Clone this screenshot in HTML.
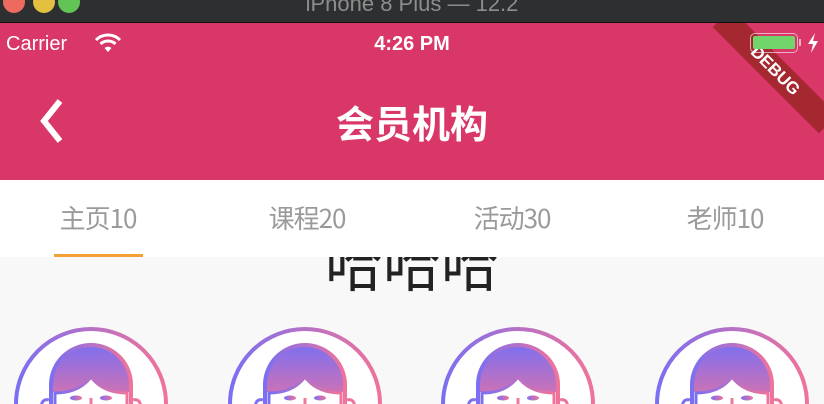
<!DOCTYPE html>
<html><head><meta charset="utf-8"><style>
*{margin:0;padding:0;box-sizing:border-box}
html,body{width:824px;height:404px;overflow:hidden}
body{background:#f8f8f8;font-family:"Liberation Sans","Noto Sans CJK SC",sans-serif;position:relative}
.top{position:absolute;left:0;top:0;width:824px;height:23px;background:#2e2f31;border-bottom:1px solid #111}
.top .t{position:absolute;left:0;width:824px;text-align:center;top:-9px;font-size:22px;color:#8d8d8d}
.dot{position:absolute;top:-9px;width:22px;height:22px;border-radius:50%}
.bar{position:absolute;left:0;top:23px;width:824px;height:157px;background:#d83767;overflow:hidden}
.st{position:absolute;color:#fff;font-size:20px;top:10px}
.title{position:absolute;left:0;width:824px;text-align:center;top:76px;font-size:38px;font-weight:bold;color:#fff;font-family:"Noto Sans CJK SC",sans-serif;line-height:46px}
.tabs{position:absolute;left:0;top:180px;width:824px;height:77px;background:#fff;z-index:2}
.tab{position:absolute;top:19px;width:206px;text-align:center;font-size:26px;color:#9a9a9a;font-family:"Noto Sans CJK SC",sans-serif;line-height:38px;letter-spacing:-1px}
.ind{position:absolute;left:54px;top:74px;width:89px;height:3px;background:#f5a037}
.big{position:absolute;left:0;width:824px;text-align:center;top:232px;font-size:58px;line-height:58px;color:#222;font-family:"Noto Sans CJK SC",sans-serif;z-index:1}
.debug{position:absolute;left:700px;top:35px;width:150px;height:26px;background:#a5272f;transform:rotate(45deg);color:#fff;font-weight:bold;font-size:17px;text-align:center;line-height:26px}
</style></head><body>
<div class="top"><div class="dot" style="left:3px;background:#ec6a5e"></div><div class="dot" style="left:33px;background:#e2c141"></div><div class="dot" style="left:58px;background:#62c454"></div><div class="t">iPhone 8 Plus — 12.2</div></div>
<div class="bar">
<div class="debug">DEBUG</div>
<div class="st" style="left:6px">Carrier</div>
<svg style="position:absolute;left:94px;top:10px" width="28" height="20" viewBox="0 0 28 20"><path d="M2 7 A17 17 0 0 1 26 7" stroke="#fff" stroke-width="3" fill="none"/><path d="M6.5 11 A11 11 0 0 1 21.5 11" stroke="#fff" stroke-width="3" fill="none"/><path d="M10.5 15 A5 5 0 0 1 17.5 15 L14 19Z" fill="#fff"/></svg>
<div class="st" style="left:0;width:824px;text-align:center;font-size:20px;font-weight:bold">4:26 PM</div>
<div style="position:absolute;left:750px;top:10px;width:48px;height:20px;border:1.5px solid rgba(255,255,255,.6);border-radius:5px"><div style="margin:2px;height:13px;background:#72d56b;border-radius:2px"></div></div>
<div style="position:absolute;left:799px;top:16px;width:2px;height:7px;background:rgba(255,255,255,.6)"></div>
<svg style="position:absolute;left:807px;top:10px" width="12" height="20" viewBox="0 0 12 20"><path d="M8 0 L1 11 H6 L4 20 L11 8 H6 Z" fill="#fff"/></svg>
<svg style="position:absolute;left:34px;top:75px" width="34" height="46" viewBox="0 0 34 46"><path d="M26 3 L10 23 L26 43" stroke="#fff" stroke-width="6" fill="none"/></svg>
<div class="title">会员机构</div>
</div>
<div class="tabs">
<div class="tab" style="left:-5px">主页10</div>
<div class="tab" style="left:204px">课程20</div>
<div class="tab" style="left:409px">活动30</div>
<div class="tab" style="left:622px">老师10</div>
<div class="ind"></div>
</div>
<div class="big">哈哈哈</div>
<svg style="position:absolute;left:0;top:320px" width="824" height="84">
<defs>
<linearGradient id="g" x1="0" x2="1" y1="0" y2="0"><stop offset="0" stop-color="#7b6ff2"/><stop offset="1" stop-color="#f0739a"/></linearGradient>
<linearGradient id="h" x1="0" x2="0" y1="0" y2="1"><stop offset="0" stop-color="#7d6ff0"/><stop offset="1" stop-color="#ef739c"/></linearGradient>
<g id="av">
<circle cx="0" cy="0" r="75" fill="#fff" stroke="url(#g)" stroke-width="4"/>
<path d="M-40 10 V-19 A40 40 0 0 1 40 -19 V10 Z" fill="url(#h)" stroke="url(#g)" stroke-width="4"/>
<rect x="-38" y="-12" width="76" height="30" fill="#fff"/>
<path d="M-36 20 V-11 Q-12 -11 0 -27 Q12 -11 36 -11 V20 Z" fill="#fff" stroke="url(#g)" stroke-width="3"/>
<path d="M-40 -12 V20 M40 -12 V20" stroke="url(#g)" stroke-width="4"/>
<ellipse cx="-15" cy="-6" rx="6" ry="2.5" fill="url(#g)"/>
<ellipse cx="15" cy="-6" rx="6" ry="2.5" fill="url(#g)"/>
<rect x="-1.5" y="-6" width="3" height="10" fill="#ee7a9e"/>
<path d="M-42 -4 A5 5 0 0 0 -46 6 M42 -4 A5 5 0 0 1 46 6" stroke="url(#g)" stroke-width="3" fill="none"/>
</g>
</defs>
<use href="#av" x="91" y="84"/>
<use href="#av" x="305" y="84"/>
<use href="#av" x="518" y="84"/>
<use href="#av" x="732" y="84"/>
</svg>
</body></html>
